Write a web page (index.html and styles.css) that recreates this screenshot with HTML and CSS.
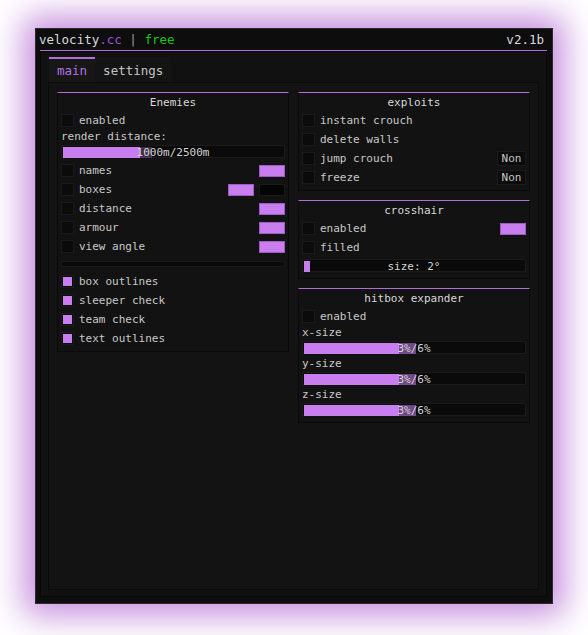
FILE: index.html
```html
<!DOCTYPE html>
<html lang="en">
<head>
    <meta charset="UTF-8">
    <meta name="viewport" content="width=device-width, initial-scale=1.0">
    <title>velocity.cc</title>
    <link rel="stylesheet" href="styles.css">
</head>
<body>
    <div class="window">
        <!-- title -->
        <div class="titlebar">
            <div class="brand">velocity<span class="cc">.cc</span> <span class="sep">|</span> <span class="free">free</span></div>
            <div class="version">v2.1b</div>
        </div>
        <div class="frame">
            <!-- tabs -->
            <div class="tabs">
                <div class="tab active">main</div>
                <div class="tab">settings</div>
            </div>
            <div class="page">
                <!-- left column -->
                <div class="column">
                    <div class="group">
                        <div class="group_title">Enemies</div>
                        <div class="row"><i class="check"></i>enabled</div>
                        <div class="label">render distance:</div>
                        <div class="slider">
                            <div class="bar"><div class="fill" style="width:35%"></div><div class="ghost small"></div></div>
                            <span>1000m/2500m</span>
                        </div>
                        <div class="row"><i class="check"></i>names<b class="swatch"></b></div>
                        <div class="row"><i class="check"></i>boxes<b class="swatch"></b><b class="swatch black"></b></div>
                        <div class="row"><i class="check"></i>distance<b class="swatch"></b></div>
                        <div class="row"><i class="check"></i>armour<b class="swatch"></b></div>
                        <div class="row"><i class="check"></i>view angle<b class="swatch"></b></div>
                        <div class="slider empty"></div>
                        <div class="row"><i class="check on"></i>box outlines</div>
                        <div class="row"><i class="check on"></i>sleeper check</div>
                        <div class="row"><i class="check on"></i>team check</div>
                        <div class="row"><i class="check on"></i>text outlines</div>
                    </div>
                </div>
                <!-- right column -->
                <div class="column">
                    <div class="group">
                        <div class="group_title">exploits</div>
                        <div class="row"><i class="check"></i>instant crouch</div>
                        <div class="row"><i class="check"></i>delete walls</div>
                        <div class="row"><i class="check"></i>jump crouch<b class="key">Non</b></div>
                        <div class="row"><i class="check"></i>freeze<b class="key">Non</b></div>
                    </div>
                    <div class="group">
                        <div class="group_title">crosshair</div>
                        <div class="row"><i class="check"></i>enabled<b class="swatch"></b></div>
                        <div class="row"><i class="check"></i>filled</div>
                        <div class="slider">
                            <div class="bar"><div class="fill" style="width:2.5%"></div></div>
                            <span>size: 2°</span>
                        </div>
                    </div>
                    <div class="group">
                        <div class="group_title">hitbox expander</div>
                        <div class="row"><i class="check"></i>enabled</div>
                        <div class="label">x-size</div>
                        <div class="slider">
                            <div class="bar"><div class="fill" style="width:43%"></div><div class="ghost"></div></div>
                            <span>3%/6%</span>
                        </div>
                        <div class="label">y-size</div>
                        <div class="slider">
                            <div class="bar"><div class="fill" style="width:43%"></div><div class="ghost"></div></div>
                            <span>3%/6%</span>
                        </div>
                        <div class="label">z-size</div>
                        <div class="slider">
                            <div class="bar"><div class="fill" style="width:43%"></div><div class="ghost"></div></div>
                            <span>3%/6%</span>
                        </div>
                    </div>
                </div>
            </div>
        </div>
    </div>
</body>
</html>
```

FILE: styles.css
```css
*{
    margin:0;
    padding:0;
    box-sizing:border-box;
}
body{
    padding:28px 0 31px 35px;
    background:#fff;
    font-family:"DejaVu Sans Mono", "Liberation Mono", monospace;
    font-size:11px;
    color:#c8c8c8;
}
.window{
    display:flex;
    flex-direction:column;
    width:518px;
    height:576px;
    padding:0 5px 6px 4px;
    background:#0d0d0d;
    border:1px solid #2e2a30;
    box-shadow:0 0 32px 11px #c48cdc;
}
.titlebar{
    display:flex;
    justify-content:space-between;
    align-items:center;
    height:22px;
    padding:0 3px 0 0;
    border-bottom:1px solid #b070dc;
    font-size:12.5px;
    color:#dadada;
}
.brand{
    margin-left:-1px;
}
.cc{
    color:#a055d2;
}
.sep{
    color:#9a9a9a;
}
.free{
    color:#16c416;
}
.frame{
    flex:1;
    display:flex;
    flex-direction:column;
    padding:5px 7px 6px 7px;
    background:#111;
    border:1px solid #080808;
}
.tabs{
    display:flex;
    height:25px;
    margin-left:1px;
}
.tab{
    padding:0 8px;
    line-height:23px;
    font-size:12.5px;
    color:#c4c4c4;
    background:#141414;
    border-top:2px solid transparent;
}
.tab.active{
    color:#b470e2;
    background:#171717;
    border-top-color:#b070dc;
}
.page{
    flex:1;
    display:flex;
    align-items:flex-start;
    gap:9px;
    padding:9px 8px;
    background:#131313;
    border:1px solid #0a0a0a;
}
.column{
    display:flex;
    flex-direction:column;
    gap:9px;
    width:232px;
}
.group{
    padding:0 3px 3px;
    background:#121212;
    border:1px solid #0a0a0a;
    border-top:1px solid #b070dc;
}
.group_title{
    height:18px;
    line-height:19px;
    text-align:center;
    color:#d8d8d8;
}
.row{
    display:flex;
    align-items:center;
    height:19px;
}
.label{
    height:13px;
    line-height:14px;
}
.check{
    width:13px;
    height:13px;
    margin-right:5px;
    background:#0b0b0b;
    border:1px solid #1a1a1a;
}
.check.on{
    background:#c97ef0;
    box-shadow:inset 0 0 0 1px #0b0b0b;
}
.swatch{
    width:26px;
    height:12px;
    margin-left:auto;
    background:#c97ef0;
    border:1px solid #9c5cc2;
}
.swatch + .swatch{
    margin-left:5px;
}
.swatch.black{
    background:#050505;
    border-color:#1a1a1a;
}
.key{
    width:29px;
    height:15px;
    margin-left:auto;
    line-height:13px;
    text-align:center;
    font-weight:normal;
    color:#c4c4c4;
    background:#0b0b0b;
    border:1px solid #1a1a1a;
}
.slider{
    display:grid;
    height:13px;
    margin:2px 0 3px;
    padding:1px;
    background:#0a0a0a;
    border:1px solid #1a1a1a;
}
.slider > *{
    grid-area:1/1;
}
.slider.empty{
    height:6px;
    margin:5px 0;
}
.bar{
    display:flex;
    height:100%;
}
.fill{
    height:100%;
    background:#c97ef0;
}
.ghost{
    width:17px;
    height:100%;
    background:rgba(201, 126, 240, 0.55);
}
.ghost.small{
    width:12px;
    background:rgba(201, 126, 240, 0.3);
}
.slider span{
    justify-self:center;
    line-height:11px;
    color:#d4d4d4;
}
```
